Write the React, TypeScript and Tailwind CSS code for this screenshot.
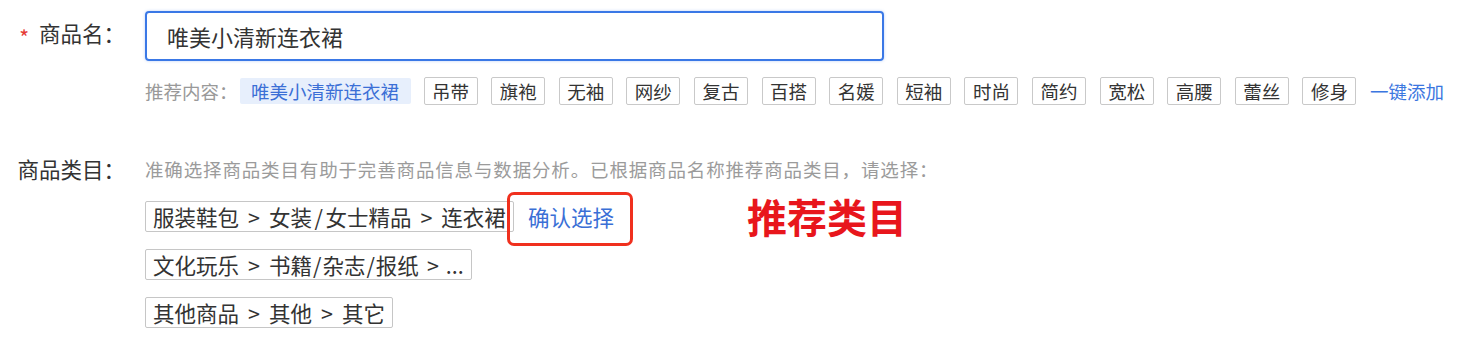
import React from "react";

const tags = ["吊带", "旗袍", "无袖", "网纱", "复古", "百搭", "名媛", "短袖", "时尚", "简约", "宽松", "高腰", "蕾丝", "修身"];

function Sep() {
  return <span className="mx-[9px]">&gt;</span>;
}
function Sl({ m = "mx-[2.5px]" }: { m?: string }) {
  return <span className={m}>/</span>;
}

const boxCls =
  "h-[31px] px-[7px] border border-[#c6c6c6] rounded-[2px] text-[21.5px] leading-[29px] text-[#333] whitespace-nowrap";

export default function App() {
  return (
    <div className="relative w-[1468px] h-[337px] bg-white text-[#333] font-['Noto_Sans_CJK_SC','Noto_Sans',sans-serif] pt-[11px]">
      {/* Row 1: product name */}
      <div className="flex items-center">
        <div className="w-[125px] text-right text-[21.5px] leading-[30px] text-[#333] -mt-[2px]">
          <span className="text-[#e53935] text-[21px] mr-[10px] align-middle">*</span>
          商品名：
        </div>
        <div className="ml-[20px] w-[739px] h-[50px] border-2 border-[#3a78e6] rounded-[4px] shadow-[0_0_3px_rgba(58,120,230,0.35)] flex items-center pl-[20px]">
          <input
            className="w-full outline-none bg-transparent text-[22px] text-[#333] font-['Noto_Sans_CJK_SC','Noto_Sans',sans-serif]"
            defaultValue="唯美小清新连衣裙"
            readOnly
          />
        </div>
      </div>

      {/* Row 2: recommended tags */}
      <div className="ml-[145px] mt-[16px] flex items-center h-[28px] text-[18.5px]">
        <span className="text-[#999] leading-[28px]">推荐内容：</span>
        <span className="ml-[2px] h-[26px] px-[11.5px] bg-[#e7effc] text-[#3b6fd6] rounded-[2px] leading-[26px]">唯美小清新连衣裙</span>
        <div className="ml-[13px] flex items-center gap-[13.6px]">
          {tags.map((t) => (
            <span key={t} className="h-[28px] px-[7.5px] border border-[#c9c9c9] rounded-[2px] leading-[26px] text-[#333]">
              {t}
            </span>
          ))}
          <span className="text-[#3b76e0] leading-[28px]">一键添加</span>
        </div>
      </div>

      {/* Row 3: category */}
      <div className="mt-[49px] flex items-start">
        <div className="w-[125px] text-right text-[21.5px] leading-[30px] text-[#333]">商品类目：</div>
        <div className="ml-[20px] flex flex-col gap-[17px]">
          <div className="text-[18.5px] leading-[30px] tracking-[0.85px] text-[#9b9b9b]">
            准确选择商品类目有助于完善商品信息与数据分析。已根据商品名称推荐商品类目，请选择：
          </div>
          <div className="relative flex items-center">
            <span className={boxCls}>
              服装鞋包<Sep />女装<Sl />女士精品<Sep />连衣裙
            </span>
            <span className="relative ml-[14px] text-[21.5px] leading-[29px] text-[#3a6fd6]">
              确认选择
              <span className="absolute left-[-21px] top-[-10px] w-[126px] h-[54px] border-[3px] border-[#f0301e] rounded-[7px]"></span>
            </span>
            <div className="absolute left-[602px] top-[-7px] text-[40px] leading-[44px] font-bold text-[#e8161c] whitespace-nowrap">推荐类目</div>
          </div>
          <div className="flex">
            <span className={boxCls}>
              文化玩乐<Sep />书籍<Sl m="mx-[1px]" />杂志<Sl m="mx-[1px]" />报纸<span className="ml-[8px] mr-[7px]">&gt;</span>...
            </span>
          </div>
          <div className="flex">
            <span className={boxCls}>
              其他商品<Sep />其他<Sep />其它
            </span>
          </div>
        </div>
      </div>
    </div>
  );
}
